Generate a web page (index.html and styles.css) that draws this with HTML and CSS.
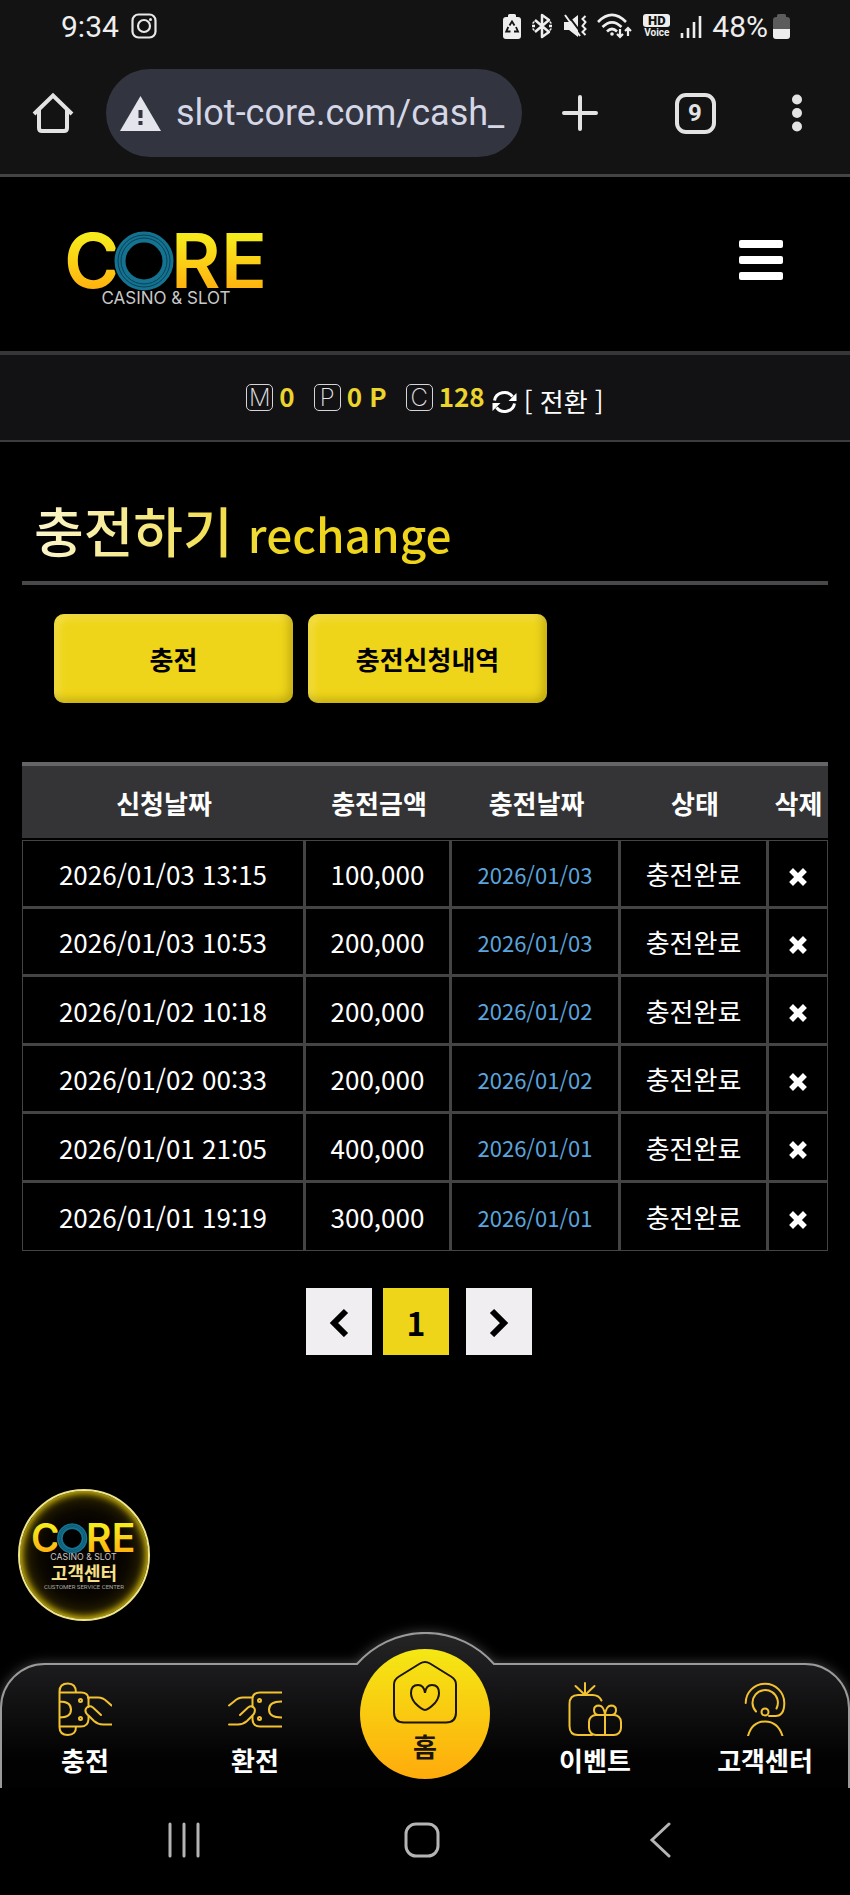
FILE: index.html
```
<!DOCTYPE html>
<html lang="ko">
<head>
    <meta charset="UTF-8">
    <meta name="viewport" content="width=device-width, initial-scale=1.0">
    <title>충전하기</title>
    <link rel="stylesheet" href="styles.css">
</head>
<body>
    <svg class="defs" width="0" height="0" aria-hidden="true">
        <defs>
            <linearGradient id="gold" x1="0" y1="0" x2="0" y2="60" gradientUnits="userSpaceOnUse">
                <stop offset="0.1" stop-color="#f6ea1c"/>
                <stop offset="0.95" stop-color="#ffb30f"/>
            </linearGradient>
            <symbol id="logo" viewBox="0 0 200 74">
                <g class="logo-word" fill="url(#gold)">
                    <text x="-3" y="57">C</text>
                    <text x="104" y="57">R</text>
                    <text x="154" y="57">E</text>
                </g>
                <circle cx="77" cy="30" r="31" fill="#000"/>
                <circle cx="77" cy="30" r="24" fill="none" stroke="#147390" stroke-width="11"/>
                <circle cx="77" cy="30" r="23" fill="none" stroke="#0a3f58" stroke-width="1"/>
                <circle cx="77" cy="30" r="26" fill="none" stroke="#0a3f58" stroke-width="1"/>
                <text class="logo-sub" x="99" y="73" text-anchor="middle">CASINO &amp; SLOT</text>
            </symbol>
            <symbol id="cross" viewBox="0 0 18 18">
                <path d="M4 4L14 14M14 4L4 14" stroke="#fff" stroke-width="5.500" stroke-linecap="square"/>
            </symbol>
        </defs>
    </svg>

    <!-- status bar -->
    <div class="status">
        <span class="clock">9:34</span>
        <svg width="26" height="26" viewBox="0 0 26 26" fill="none" stroke="#e8e8e8" stroke-width="2.200">
            <rect x="1.500" y="1.500" width="23" height="23" rx="6"/>
            <circle cx="13" cy="13" r="6"/>
            <circle cx="19.500" cy="6.500" r="1.500" fill="#e8e8e8" stroke="none"/>
        </svg>
        <div class="status-right">
            <svg width="18" height="25" viewBox="0 0 18 25">
                <path d="M5 3V1.500Q5 0 6.500 0h5Q13 0 13 1.500V3h2q3 0 3 3v16q0 3-3 3H3q-3 0-3-3V6q0-3 3-3z" fill="#eee"/>
                <path d="M6.500 11.500L9 7.500l2.500 4M13 13l2 4.500h-4M7.500 17.500H3.200L5.300 13" fill="none" stroke="#131314" stroke-width="1.800"/>
            </svg>
            <svg width="22" height="26" viewBox="0 0 22 26" fill="none" stroke="#eee" stroke-width="2.500" stroke-linejoin="round">
                <path d="M4 7l14 12-7 5V2l7 5L4 19"/>
                <path d="M1 13h3M18 13h3M2 9l1 1M2 17l1-1M20 9l-1 1M20 17l-1-1"/>
            </svg>
            <svg width="24" height="26" viewBox="0 0 24 26">
                <path d="M1 9h5l9-7v22l-9-7H1z" fill="#eee"/>
                <path d="M4 1l15 20" stroke="#131314" stroke-width="2"/>
                <path d="M2 2l15 21M22.500 3l-3 3 3 3-3 4 3 3-3 3 3 3" fill="none" stroke="#eee" stroke-width="2"/>
            </svg>
            <svg width="36" height="26" viewBox="0 0 36 26" fill="none" stroke="#eee" stroke-width="2.600">
                <path d="M1 9Q15-5 29 9M5.500 14Q15 4.500 24.500 14M10 18.500q5-5 10 0"/>
                <circle cx="15" cy="21" r="1.800" fill="#eee" stroke="none"/>
                <path d="M23 16v8M20 21l3 3 3-3M31 23v-8M28 18l3-3 3 3" stroke-width="2.200"/>
            </svg>
            <span class="volte"><b>HD</b>Voice</span>
            <svg width="22" height="23" viewBox="0 0 22 23" stroke="#eee" stroke-width="2.600">
                <path d="M2 18v5M8 13v10M14 7v16M20 1v22"/>
            </svg>
            <span class="percent">48%</span>
            <svg class="battery" width="17" height="25" viewBox="0 0 17 25">
                <path d="M4 3V1.500Q4 0 5.500 0h6Q13 0 13 1.500V3h1q3 0 3 3v9H0V6q0-3 3-3z" fill="#5c5c5c"/>
                <path d="M0 15h17v7q0 3-3 3H3q-3 0-3-3z" fill="#eee"/>
            </svg>
        </div>
    </div>

    <!-- browser toolbar -->
    <div class="toolbar">
        <button class="tool" aria-label="홈페이지">
            <svg width="42" height="42" viewBox="0 0 42 42" fill="none" stroke="#e3e3e3" stroke-width="4">
                <path d="M2 22L21 3.500 40 22"/>
                <path d="M7 18v18q0 3 3 3h22q3 0 3-3V18"/>
            </svg>
        </button>
        <div class="url">
            <svg width="41" height="35" viewBox="0 0 41 35">
                <path d="M20.500 0L41 35H0z" fill="#e4e5ec"/>
                <path d="M20.500 14v8M20.500 25v4" stroke="#32343f" stroke-width="4"/>
            </svg>
            <input type="text" value="slot-core.com/cash_" aria-label="주소">
        </div>
        <div class="tools">
            <button class="tool" aria-label="새 탭">
                <svg width="36" height="36" viewBox="0 0 36 36" stroke="#e3e3e3" stroke-width="4" stroke-linecap="round">
                    <path d="M18 2v32M2 18h32"/>
                </svg>
            </button>
            <button class="tool tabs" aria-label="탭 9개">9</button>
            <button class="tool" aria-label="더보기">
                <svg width="10" height="38" viewBox="0 0 10 38" fill="#e3e3e3">
                    <circle cx="5" cy="5.500" r="5"/>
                    <circle cx="5" cy="19" r="5"/>
                    <circle cx="5" cy="32.500" r="5"/>
                </svg>
            </button>
        </div>
    </div>

    <header class="header">
        <a href="#" aria-label="CORE"><svg width="200" height="74"><use href="#logo"/></svg></a>
        <button class="menu" aria-label="메뉴"><i></i><i></i><i></i></button>
    </header>

    <div class="wallet">
        <span class="coin">M</span><b>0</b>
        <span class="coin">P</span><b>0 P</b>
        <span class="coin">C</span><b>128</b>
        <button class="convert">
            <svg width="25" height="24" viewBox="0 0 25 24">
                <path d="M2.500 10.500A10 9.500 0 0 1 20.500 6.500M22.500 13.500A10 9.500 0 0 1 4.500 17.500" fill="none" stroke="#fff" stroke-width="3"/>
                <path d="M24.500 3v8h-8zM.5 21v-8h8z" fill="#fff"/>
            </svg>
            [ 전환 ]
        </button>
    </div>

    <main class="main">
        <h1 class="title"><span>충전하기 <small>rechange</small></span></h1>

        <div class="buttons">
            <button>충전</button>
            <button>충전신청내역</button>
        </div>

        <table class="history">
            <colgroup>
                <col class="col-time"><col class="col-amount"><col class="col-date"><col class="col-state"><col class="col-del">
            </colgroup>
            <thead>
                <tr><th>신청날짜</th><th>충전금액</th><th>충전날짜</th><th>상태</th><th>삭제</th></tr>
            </thead>
            <tbody>
                <tr><td>2026/01/03 13:15</td><td>100,000</td><td class="date">2026/01/03</td><td>충전완료</td><td><button aria-label="삭제"><svg width="18" height="18"><use href="#cross"/></svg></button></td></tr>
                <tr><td>2026/01/03 10:53</td><td>200,000</td><td class="date">2026/01/03</td><td>충전완료</td><td><button aria-label="삭제"><svg width="18" height="18"><use href="#cross"/></svg></button></td></tr>
                <tr><td>2026/01/02 10:18</td><td>200,000</td><td class="date">2026/01/02</td><td>충전완료</td><td><button aria-label="삭제"><svg width="18" height="18"><use href="#cross"/></svg></button></td></tr>
                <tr><td>2026/01/02 00:33</td><td>200,000</td><td class="date">2026/01/02</td><td>충전완료</td><td><button aria-label="삭제"><svg width="18" height="18"><use href="#cross"/></svg></button></td></tr>
                <tr><td>2026/01/01 21:05</td><td>400,000</td><td class="date">2026/01/01</td><td>충전완료</td><td><button aria-label="삭제"><svg width="18" height="18"><use href="#cross"/></svg></button></td></tr>
                <tr><td>2026/01/01 19:19</td><td>300,000</td><td class="date">2026/01/01</td><td>충전완료</td><td><button aria-label="삭제"><svg width="18" height="18"><use href="#cross"/></svg></button></td></tr>
            </tbody>
        </table>

        <nav class="pages" aria-label="페이지">
            <a href="#" aria-label="이전">
                <svg width="20" height="30" viewBox="0 0 20 30" fill="none" stroke="#000" stroke-width="6"><path d="M17 4L5 16l12 12"/></svg>
            </a>
            <a href="#" class="current">1</a>
            <a href="#" class="next" aria-label="다음">
                <svg width="20" height="30" viewBox="0 0 20 30" fill="none" stroke="#000" stroke-width="6"><path d="M3 4l12 12L3 28"/></svg>
            </a>
        </nav>

        <a href="#" class="center">
            <svg width="104" height="38"><use href="#logo"/></svg>
            <b>고객센터</b>
            <small>CUSTOMER SERVICE CENTER</small>
        </a>
    </main>

    <nav class="bottom">
        <svg class="bottom-bg" viewBox="0 0 850 156" preserveAspectRatio="none">
            <defs>
                <linearGradient id="bar" x1="0" y1="0" x2="0" y2="1">
                    <stop offset="0" stop-color="#252526"/>
                    <stop offset="0.25" stop-color="#1a1a1c"/>
                    <stop offset="0.8" stop-color="#020202"/>
                </linearGradient>
            </defs>
            <path d="M1 158V76A44 44 0 0 1 45 32H357A91 91 0 0 1 494 32H805A44 44 0 0 1 849 76V158" fill="url(#bar)" stroke="#9a9a9a" stroke-width="2"/>
        </svg>
        <a href="#">
            <svg width="54" height="54" viewBox="0 0 54 54">
                <path d="M18 10.500Q18 1.500 9.800 1.500T1.500 9.500V45q0 8 8.300 8T18 44.500M1.500 10.500H23q7 0 7.500 6M1.500 44.500H23q7 0 7.500-7V34M1.500 19.500q11.500 0 11.500 8t-11.500 8"/>
                <path d="M30 15.500h10q5 0 9 4l4.500 4M43 33l-8-7.500q-4-3-7 1-2 4 3 7.500l5 5q4 3.500 9 3.500h8.500M30.500 16v9"/>
                <circle cx="22.500" cy="18.500" r="1.500"/><circle cx="22.500" cy="36.500" r="1.500"/>
            </svg>
            충전
        </a>
        <a href="#">
            <svg width="54" height="54" viewBox="0 0 54 54">
                <path d="M53.500 10.500H32q-7 0-7.500 6v8.500M53.500 44.500H32q-7 0-7.500-7V34M53.500 19.500Q41 19.500 41 27.500t12.500 8"/>
                <path d="M24 15.500H15q-5 0-9 4l-5 4M12 33l8-7.500q4-3 6.500 1 1.500 4-2.500 7.500l-5 5q-4 3.500-9 3.500H1"/>
                <circle cx="31.500" cy="18.500" r="1.500"/><circle cx="31.500" cy="36.500" r="1.500"/>
            </svg>
            환전
        </a>
        <a href="#" class="home">
            <svg width="64" height="64" viewBox="0 0 64 64">
                <path d="M27 3.500q5-3 10 0l21 13q5 3 5 8v28q0 10-10 10H11Q1 62.500 1 52.500v-28q0-5 5-8z"/>
                <path d="M32 33q-1-8-7-8-7 0-7 8 0 5 4 10 7 7 10 7t10-7q4-5 4-10 0-8-7-8-6 0-7 8z"/>
            </svg>
            홈
        </a>
        <a href="#">
            <svg width="54" height="54" viewBox="0 0 54 54">
                <path d="M17 13V1M17 13L7.500 4M17 13l9.500-9M33.500 18.500Q31 13 24.500 13H10Q1.500 13 1.500 22v22q0 9 8.500 9h14"/>
                <rect x="21" y="33" width="32" height="20" rx="7"/>
                <path d="M37 33v20M37 33q-1-9-6-9.500-5 0-5 4.500t4 5M37 33q1-9 6-9.500 5 0 5 4.500t-4 5"/>
            </svg>
            이벤트
        </a>
        <a href="#">
            <svg width="54" height="54" viewBox="0 0 54 54">
                <path d="M7.700 21A19.300 19.300 0 1 1 46.300 21q0 13-9 13H31M18 29.500A12.700 12.700 0 1 1 38.500 26.500M10 54q4-14.500 17-14.500T44.500 54"/>
                <circle cx="27" cy="30" r="3.500"/>
            </svg>
            고객센터
        </a>
    </nav>

    <!-- android navigation -->
    <div class="system">
        <button aria-label="최근 앱">
            <svg width="36" height="36" viewBox="0 0 36 36"><path d="M4 2v32M18 2v32M32 2v32"/></svg>
        </button>
        <button aria-label="홈">
            <svg width="36" height="36" viewBox="0 0 36 36"><rect x="2" y="2" width="32" height="32" rx="10"/></svg>
        </button>
        <button aria-label="뒤로">
            <svg width="36" height="36" viewBox="0 0 36 36"><path d="M27 2L10 18l17 16"/></svg>
        </button>
    </div>
</body>
</html>
```
FILE: styles.css
```
* {
    box-sizing: border-box;
}

body {
    display: flex;
    flex-direction: column;
    min-height: 100vh;
    margin: 0;
    background: #000;
    color: #fff;
    font-family: "Noto Sans CJK KR", sans-serif;
    font-size: 26px;
}

button {
    padding: 0;
    border: none;
    background: none;
    color: inherit;
    font: inherit;
    cursor: pointer;
}

a {
    color: inherit;
    text-decoration: none;
}

svg {
    display: block;
    flex: none;
}

.defs {
    position: absolute;
}

/* status bar */
.status {
    display: flex;
    align-items: center;
    gap: 12px;
    height: 52px;
    padding: 0 60px 0 61px;
    background: #131314;
    color: #eee;
    font-family: Roboto, sans-serif;
    font-size: 30px;
}

.status-right {
    display: flex;
    align-items: center;
    gap: 10px;
    margin-left: auto;
}

.volte {
    display: flex;
    flex-direction: column;
    align-items: center;
    font-size: 10px;
    font-weight: 700;
    line-height: 11px;
}

.volte b {
    width: 27px;
    border-radius: 3px;
    background: #eee;
    color: #131314;
    font-size: 13px;
    line-height: 13px;
    text-align: center;
}

.battery {
    margin-left: -5px;
}

/* browser toolbar */
.toolbar {
    display: flex;
    align-items: center;
    height: 125px;
    padding: 0 48px 0 32px;
    border-bottom: 3px solid #444;
    background: #131314;
    font-family: Roboto, sans-serif;
}

.url {
    display: flex;
    flex: 0 1 416px;
    align-items: center;
    gap: 15px;
    min-width: 0;
    height: 88px;
    margin-left: 32px;
    padding: 0 14px;
    border-radius: 44px;
    background: #32343f;
}

.url input {
    flex: 1;
    min-width: 0;
    padding: 0;
    border: none;
    outline: none;
    background: none;
    color: #d5d7e6;
    font-family: Roboto, sans-serif;
    font-size: 36px;
}

.tools {
    display: flex;
    flex: 1;
    align-items: center;
    justify-content: space-between;
    padding-left: 40px;
}

.tabs {
    width: 41px;
    height: 41px;
    border: 4px solid #e3e3e3;
    border-radius: 11px;
    color: #e3e3e3;
    font-size: 24px;
    font-weight: 700;
    line-height: 33px;
}

/* site header */
.header {
    display: flex;
    align-items: flex-start;
    justify-content: space-between;
    height: 178px;
    padding: 54px 67px 0;
    border-bottom: 4px solid #363638;
}

.logo-word {
    font-family: Inter, sans-serif;
    font-size: 76px;
    font-weight: 600;
}

.logo-sub {
    fill: #c8c8c8;
    font-family: Inter, sans-serif;
    font-size: 17px;
}

.menu {
    display: flex;
    flex-direction: column;
    gap: 8px;
    width: 44px;
    margin-top: 9px;
}

.menu i {
    height: 8px;
    border-radius: 2px;
    background: #fff;
}

.wallet {
    display: flex;
    align-items: center;
    justify-content: center;
    height: 87px;
    border-bottom: 2px solid #3c3c3f;
    background: #121214;
}

.wallet b {
    margin: 0 19px 0 6px;
    padding-bottom: 4px;
    color: #ebd42c;
}

.wallet b:last-of-type {
    margin-right: 7px;
}

.coin {
    width: 27px;
    height: 27px;
    border: 1px solid #d5d5d8;
    border-radius: 5px;
    color: #e5e5e8;
    font-family: Inter, sans-serif;
    font-size: 24px;
    font-weight: 200;
    line-height: 25px;
    text-align: center;
}

.convert {
    display: flex;
    align-items: center;
    gap: 7px;
    padding-top: 5px;
}

.convert svg {
    margin-top: 4px;
}

/* content */
.main {
    display: flex;
    flex: 1;
    flex-direction: column;
    padding: 49px 22px 11px 22px;
}

.title {
    margin: 0;
    padding: 0 12px 12px;
    border-bottom: 4px solid #48484a;
    font-size: 54px;
    font-weight: 500;
    line-height: 78px;
}

.title span {
    background: linear-gradient(90deg, #fbf6cf, #eed51c 260px);
    -webkit-background-clip: text;
    background-clip: text;
    color: transparent;
}

.title small {
    font-size: 46px;
    line-height: 1;
}

.buttons {
    display: flex;
    gap: 15px;
    margin: 29px 32px 59px;
}

.buttons button {
    width: 239px;
    height: 89px;
    border-radius: 10px;
    background: #eed51a;
    box-shadow: inset -4px -4px 8px rgba(130, 110, 0, 0.4), inset 4px 4px 8px rgba(255, 240, 150, 0.4);
    color: #000;
    font-weight: 700;
}

.history {
    width: 100%;
    border-spacing: 0;
    table-layout: fixed;
    text-align: center;
}

.col-time { width: 284px; }
.col-amount { width: 146px; }
.col-date { width: 169px; }
.col-state { width: 148px; }

.history th {
    height: 78px;
    padding: 0;
    border-top: 4px solid #656567;
    border-bottom: 2px solid #000;
    background: #343335;
}

.history td {
    height: 68px;
    padding: 0;
    border-right: 3px solid #444;
    border-bottom: 3px solid #444;
}

.history tr:nth-child(odd) td {
    height: 69px;
}

.history td:first-child {
    border-left: 1px solid #444;
}

.history td:last-child {
    border-right-width: 1px;
}

.history tr:first-child td {
    border-top: 1px solid #444;
}

.history tr:last-child td {
    border-bottom-width: 1px;
}

.history td button {
    display: block;
    margin: 6px auto 0;
}

.history .date {
    color: #5ba4dd;
    font-size: 22px;
}

.pages {
    display: flex;
    justify-content: center;
    gap: 11px;
    margin-top: 37px;
    padding-right: 12px;
}

.pages a {
    display: flex;
    align-items: center;
    justify-content: center;
    width: 66px;
    height: 67px;
    background: #f0eef0;
    color: #000;
    font-size: 32px;
    font-weight: 700;
}

.pages .current {
    background: #eed51a;
}

.pages .next {
    margin-left: 6px;
}

.center {
    display: flex;
    flex-direction: column;
    align-items: center;
    align-self: flex-start;
    width: 132px;
    height: 132px;
    margin: auto 0 0 -4px;
    padding-top: 32px;
    border: 2px solid #efe58a;
    border-radius: 50%;
    background: #080500;
    box-shadow: inset 0 0 7px 2px #d8c010, inset 0 0 22px 2px #5a4b00;
}

.center b {
    color: #f6e08a;
    font-size: 18px;
    line-height: 22px;
}

.center small {
    color: #aaa;
    font-family: Roboto, sans-serif;
    font-size: 6px;
    line-height: 8px;
    white-space: nowrap;
}

/* bottom menu */
.bottom {
    display: grid;
    position: relative;
    grid-template-columns: repeat(5, 1fr);
    height: 156px;
}

.bottom-bg {
    position: absolute;
    width: 100%;
    height: 100%;
    filter: drop-shadow(0 0 6px rgba(255, 255, 255, 0.25));
    clip-path: inset(-20px 0 0 0);
}

.bottom a {
    display: flex;
    position: relative;
    flex-direction: column;
    align-items: center;
    gap: 6px;
    padding-top: 50px;
    font-weight: 700;
    line-height: 36px;
}

.bottom a svg {
    fill: none;
    stroke: #f2c230;
    stroke-width: 2;
    stroke-linecap: round;
}

.bottom .home {
    gap: 4px;
    justify-self: center;
    width: 130px;
    height: 130px;
    margin-top: 17px;
    padding-top: 11px;
    border-radius: 50%;
    background: linear-gradient(#f4e814, #ffab0c);
    color: #1b1508;
}

.bottom .home svg {
    stroke: #1b1508;
}

/* android navigation */
.system {
    display: grid;
    grid-template-columns: repeat(3, 1fr);
    align-items: center;
    height: 107px;
    padding: 0 71px 4px 65px;
}

.system svg {
    margin: auto;
    fill: none;
    stroke: #b4b4b6;
    stroke-width: 3;
    stroke-linecap: round;
}
```
